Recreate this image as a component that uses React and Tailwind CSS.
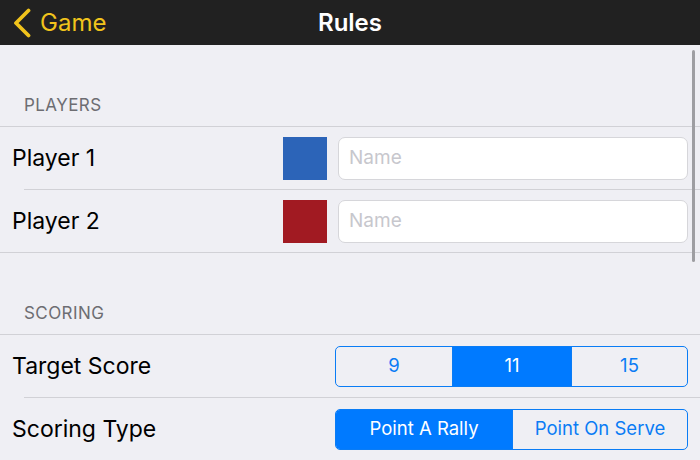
import React from 'react';

const font = { fontFamily: 'Inter, "Noto Sans", sans-serif' };

function Section({ title, children }) {
  return (
    <div>
      <div className="h-[81px] flex items-end pb-[8px] px-6 text-[17px] tracking-wide text-[#6d6d72]">
        {title}
      </div>
      <div className="h-px bg-[#d1d1d6]" />
      {children}
    </div>
  );
}

function Row({ label, children, last }) {
  return (
    <>
      <div className="h-[62px] flex items-center justify-between pl-3 pr-3">
        <span className="text-[23px] text-black">{label}</span>
        {children}
      </div>
      <div className={last ? 'h-px bg-[#d1d1d6]' : 'h-px bg-[#d1d1d6] ml-6'} />
    </>
  );
}

function PlayerInput({ color }) {
  return (
    <div className="flex items-center gap-[11px]">
      <div className={`w-[44px] h-[43px] ${color}`} />
      <div className="w-[350px] h-[43px] bg-white border border-[#d6d6da] rounded-[7px] flex items-center px-[10px] text-[19px] text-[#c7c7cd]">
        Name
      </div>
    </div>
  );
}

function Segmented({ items, selected, widths }) {
  return (
    <div className="flex h-[41px] border border-[#0a7cf5] rounded-[5px] overflow-hidden">
      {items.map((it, i) => (
        <div
          key={it}
          className={`flex items-center justify-center text-[18.5px] ${widths[i]} ${i > 0 ? 'border-l border-[#0a7cf5]' : ''} ${
            i === selected ? 'bg-[#007aff] text-white' : 'text-[#0a7cf5]'
          }`}
        >
          {it}
        </div>
      ))}
    </div>
  );
}

export default function App() {
  return (
    <div className="w-[700px] h-[460px] overflow-hidden flex flex-col bg-[#efeff4]" style={font}>
      {/* Nav bar */}
      <div className="h-[45px] shrink-0 bg-[#212121] grid grid-cols-[1fr_auto_1fr] items-center">
        <div className="flex items-center pl-3 text-[#f0c31c]">
          <svg width="20" height="30" viewBox="0 0 20 30" fill="none">
            <path d="M16.5 2.5 L4 15 L16.5 27.5" stroke="#f0c31c" strokeWidth="3.8" strokeLinecap="round" strokeLinejoin="round" />
          </svg>
          <span className="ml-[8px] text-[24px]">Game</span>
        </div>
        <div className="text-white text-[24px] font-semibold">Rules</div>
        <div />
      </div>

      {/* Content */}
      <div className="relative flex-1">
        <div className="absolute right-[5px] top-[5px] w-[3px] h-[212px] rounded-full bg-[#9e9ea2]" />
        <Section title="PLAYERS">
          <Row label="Player 1">
            <PlayerInput color="bg-[#2c64b8]" />
          </Row>
          <Row label="Player 2" last>
            <PlayerInput color="bg-[#a11a22]" />
          </Row>
        </Section>
        <Section title="SCORING">
          <Row label="Target Score">
            <Segmented items={['9', '11', '15']} selected={1} widths={['w-[116px]', 'w-[119px]', 'w-[116px]']} />
          </Row>
          <Row label="Scoring Type">
            <Segmented items={['Point A Rally', 'Point On Serve']} selected={0} widths={['w-[176px]', 'w-[175px]']} />
          </Row>
        </Section>
      </div>
    </div>
  );
}
